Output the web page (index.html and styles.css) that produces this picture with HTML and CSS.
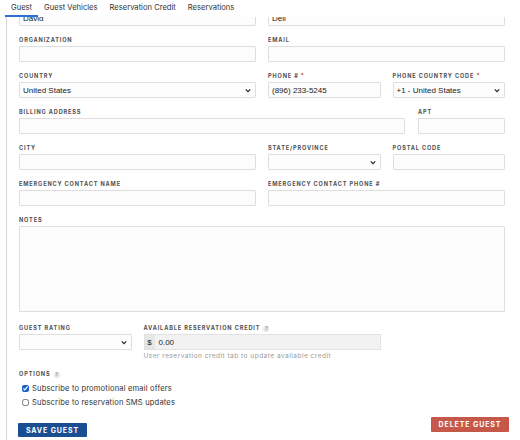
FILE: index.html
```html
<!DOCTYPE html>
<html>
<head>
<meta charset="utf-8">
<link rel="stylesheet" href="styles.css">
</head>
<body>
<nav class="tabs">
  <a class="tab active">Guest</a>
  <a class="tab">Guest Vehicles</a>
  <a class="tab">Reservation Credit</a>
  <a class="tab">Reservations</a>
</nav>
<section class="panel">
  <div class="form">
    <div class="grid">
      <div class="field span2"><label class="lbl scrolled">First Name</label><input class="inp" value="David"></div>
      <div class="field span2"><label class="lbl scrolled">Last Name</label><input class="inp" value="Dell"></div>

      <div class="field span2"><label class="lbl">Organization</label><input class="inp"></div>
      <div class="field span2"><label class="lbl">Email</label><input class="inp"></div>

      <div class="field span2"><label class="lbl">Country</label><select class="sel"><option>United States</option></select></div>
      <div class="field"><label class="lbl">Phone # <span class="req">*</span></label><input class="inp" value="(896) 233-5245"></div>
      <div class="field"><label class="lbl">Phone Country Code <span class="req">*</span></label><select class="sel"><option>+1 - United States</option></select></div>

      <div class="span4 addr-row">
        <div class="field billing"><label class="lbl">Billing Address</label><input class="inp"></div>
        <div class="field apt"><label class="lbl">Apt</label><input class="inp"></div>
      </div>

      <div class="field span2"><label class="lbl">City</label><input class="inp"></div>
      <div class="field"><label class="lbl">State/Province</label><select class="sel"><option></option></select></div>
      <div class="field"><label class="lbl">Postal Code</label><input class="inp"></div>

      <div class="field span2"><label class="lbl">Emergency Contact Name</label><input class="inp"></div>
      <div class="field span2"><label class="lbl">Emergency Contact Phone #</label><input class="inp"></div>

      <div class="field span4 notes"><label class="lbl">Notes</label><textarea class="ta"></textarea></div>

      <div class="field"><label class="lbl">Guest Rating</label><select class="sel"><option></option></select></div>
      <div class="field span2"><label class="lbl">Available Reservation Credit <span class="help">?</span></label>
        <div class="credit"><span class="addon">$</span><span class="credit-val">0.00</span></div>
        <div class="hint">User reservation credit tab to update available credit</div>
      </div>
    </div>

    <div class="options">
      <div class="lbl">Options <span class="help">?</span></div>
      <label class="chk"><input type="checkbox" checked> Subscribe to promotional email offers</label>
      <label class="chk"><input type="checkbox"> Subscribe to reservation SMS updates</label>
    </div>

    <div class="actions">
      <button class="btn save">Save Guest</button>
      <button class="btn delete">Delete Guest</button>
    </div>
  </div>
</section>
</body>
</html>
```
FILE: styles.css
```css
* { box-sizing: border-box; }
html, body { margin: 0; padding: 0; background: #fff; }
body {
  width: 520px;
  height: 440px;
  overflow: hidden;
  font-family: Inter, "Open Sans", sans-serif;
  color: #333;
}
.tabs {
  display: flex;
  height: 17px;
  padding-left: 5px;
  position: relative;
  z-index: 1;
  background: #fff;
}
.tab {
  display: block;
  padding: 0 6px;
  font-size: 7.6px;
  line-height: 16px;
  color: #333;
  border-bottom: 2px solid transparent;
}
.active { border-bottom-color: #2f6fd1; }
.panel {
  margin: -1px 10px 0 6px;
  border-top: 1px solid #d8d8d8;
  border-left: 1px solid #d8d8d8;
  height: 424px;
  overflow: hidden;
  padding: 0 5px 0 12px;
}
.form { margin-top: -17px; }
.grid {
  display: grid;
  grid-template-columns: repeat(4, 1fr);
  column-gap: 12px;
  row-gap: 10px;
}
.field { display: flex; flex-direction: column; min-width: 0; }
.span2 { grid-column: span 2; }
.span4 { grid-column: span 4; }
.addr-row { display: flex; gap: 13px; }
.billing { flex: 1; }
.apt { width: 87px; }
.lbl {
  display: block;
  font-size: 5.6px;
  font-weight: 700;
  letter-spacing: 0.85px;
  text-transform: uppercase;
  line-height: 8px;
  height: 8px;
  margin-bottom: 2px;
  color: #505050;
  white-space: nowrap;
}
.scrolled { visibility: hidden; }
.req { color: #c0392b; }
.help {
  display: inline-block;
  width: 6px;
  height: 6px;
  border-radius: 50%;
  background: #e4e4e4;
  color: #999;
  font-size: 4.5px;
  line-height: 6px;
  text-align: center;
  letter-spacing: 0;
  margin-left: 1px;
}
.inp, .sel, .ta {
  display: block;
  width: 100%;
  height: 16px;
  margin: 0;
  border: 1px solid #dedede;
  border-radius: 1px;
  background: #fcfcfc;
  font-family: "Liberation Sans", Arial, sans-serif;
  font-size: 8px;
  color: #222;
  padding: 0 3px;
  outline: none;
}
.sel {
  -webkit-appearance: none;
  appearance: none;
  background-color: #fdfdfd;
  background-image: url("data:image/svg+xml;utf8,<svg xmlns='http://www.w3.org/2000/svg' width='8' height='6' viewBox='0 0 8 6'><path d='M1 1.5 L4 4.5 L7 1.5' fill='none' stroke='%23222' stroke-width='1.6'/></svg>");
  background-repeat: no-repeat;
  background-position: right 4px center;
  background-size: 6px 5px;
  padding-left: 3px;
}
.ta { height: 86px; resize: none; }
.notes { margin-bottom: 2px; }
.credit {
  display: flex;
  align-items: center;
  height: 16px;
  border: 1px solid #e2e2e2;
  background: #f2f2f2;
  font-family: "Liberation Sans", Arial, sans-serif;
  font-size: 8px;
  color: #222;
}
.addon {
  width: 10px;
  height: 100%;
  background: #e6e6e6;
  display: flex;
  align-items: center;
  justify-content: center;
}
.credit-val { padding-left: 4px; }
.hint {
  margin-top: 2px;
  font-size: 6.6px;
  line-height: 8px;
  color: #9a9a9a;
  letter-spacing: 0.45px;
  white-space: nowrap;
}
.options { margin-top: 10px; }
.options .lbl { margin-bottom: 3px; }
.chk {
  display: flex;
  align-items: center;
  height: 14px;
  font-size: 7.6px;
  color: #333;
  letter-spacing: 0.15px;
}
.chk input {
  width: 7px;
  height: 7px;
  margin: 0 3px 0 3px;
  accent-color: #1a62c9;
}
.actions {
  display: flex;
  justify-content: space-between;
  align-items: flex-start;
  margin-top: 8px;
}
.btn {
  border: 0;
  border-radius: 1px;
  color: #fff;
  font-family: Inter, "Open Sans", sans-serif;
  font-size: 7px;
  font-weight: 700;
  letter-spacing: 0.9px;
  text-transform: uppercase;
  white-space: nowrap;
  padding: 0;
  cursor: pointer;
}
.save {
  background: #1a4e92;
  height: 14px;
  width: 69px;
  margin-top: 6px;
  margin-left: -1px;
}
.delete {
  background: #c6584a;
  height: 15px;
  width: 78px;
  margin-right: -4px;
}
```
